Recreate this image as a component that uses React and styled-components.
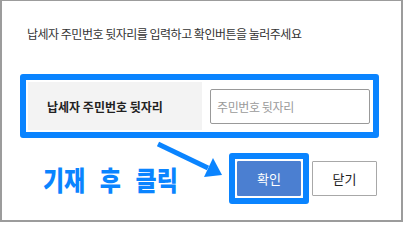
import React from 'react';
import styled, { createGlobalStyle } from 'styled-components';

const GlobalStyle = createGlobalStyle`
  html, body {
    margin: 0;
    padding: 0;
    background: #ffffff;
  }
  body {
    font-family: "Noto Sans CJK KR", "Noto Sans", sans-serif;
  }
  * {
    box-sizing: border-box;
  }
`;

const Popup = styled.div`
  position: relative;
  width: 403px;
  height: 222px;
  background: #ffffff;
  border-style: solid;
  border-color: #9c9c9c;
  border-width: 1px 2px 2px 2px;
  display: flex;
  flex-direction: column;
`;

const Guide = styled.p`
  margin: 24px 0 0 25px;
  font-size: 12px;
  line-height: 17px;
  letter-spacing: -0.5px;
  color: #333333;
`;

const Highlight = styled.div`
  margin: 32px 0 0 18px;
  width: 359px;
  height: 64px;
  border: 6px solid #0a84ff;
  border-radius: 3px;
  padding: 2px;
  display: flex;
`;

const LabelCell = styled.div`
  width: 174px;
  background: #f3f3f3;
  display: flex;
  align-items: center;
  padding-left: 19px;
  font-size: 12px;
  font-weight: 700;
  color: #222222;
`;

const InputCell = styled.div`
  flex: 1;
  display: flex;
  align-items: center;
  padding: 0 1px 0 8px;
`;

const SsnInput = styled.input`
  width: 100%;
  height: 35px;
  border: 1px solid #999999;
  border-radius: 2px;
  padding: 0 6px;
  font-family: inherit;
  font-size: 12px;
  letter-spacing: -0.4px;
  color: #333333;
  outline: none;

  &::placeholder {
    color: #9a9a9a;
  }
`;

const ActionRow = styled.div`
  position: relative;
  margin-top: 15px;
  height: 50px;
  padding: 0 24px 0 41px;
  display: flex;
  align-items: center;
  justify-content: space-between;
`;

// 주석 글씨: 세로로 긴 굵은 글꼴처럼 보이게 가로로 눌러 줌
const Annotation = styled.span`
  display: inline-block;
  font-size: 27px;
  font-weight: 900;
  word-spacing: 11px;
  line-height: 1;
  white-space: nowrap;
  color: #0a84ff;
  margin-top: 2px;
  margin-right: -26px;
  transform: scaleX(0.85);
  transform-origin: left center;
`;

const Arrow = styled.svg`
  position: absolute;
  left: 148px;
  top: -15px;
`;

const Buttons = styled.div`
  display: flex;
  align-items: center;
  gap: 3px;
`;

const FocusFrame = styled.div`
  border: 6px solid #0a84ff;
  border-radius: 3px;
  padding: 2px;
  display: flex;
`;

const Button = styled.button`
  width: ${({ $wide }) => ($wide ? '65px' : '64px')};
  height: 35px;
  border: 1px solid ${({ $primary }) => ($primary ? '#4b7fd1' : '#a8a8a8')};
  border-radius: 1px;
  background: ${({ $primary }) => ($primary ? '#4b7fd1' : '#ffffff')};
  color: ${({ $primary }) => ($primary ? '#ffffff' : '#222222')};
  font-family: inherit;
  font-size: 13px;
  padding: 0;
  cursor: pointer;
`;

export default function App() {
  return (
    <>
      <GlobalStyle />
      <Popup>
        <Guide>납세자 주민번호 뒷자리를 입력하고 확인버튼을 눌러주세요</Guide>

        <Highlight>
          <LabelCell>납세자 주민번호 뒷자리</LabelCell>
          <InputCell>
            <SsnInput type="password" placeholder="주민번호 뒷자리" />
          </InputCell>
        </Highlight>

        <ActionRow>
          <Annotation>기재 후 클릭</Annotation>
          <Arrow width="78" height="46" viewBox="0 0 78 46">
            <line x1="8" y1="6" x2="58" y2="30" stroke="#0a84ff" strokeWidth="5" strokeLinecap="butt" />
            <polygon points="63,20 72,37 54,39" fill="#0a84ff" />
          </Arrow>
          <Buttons>
            <FocusFrame>
              <Button $primary>확인</Button>
            </FocusFrame>
            <Button $wide>닫기</Button>
          </Buttons>
        </ActionRow>
      </Popup>
    </>
  );
}
